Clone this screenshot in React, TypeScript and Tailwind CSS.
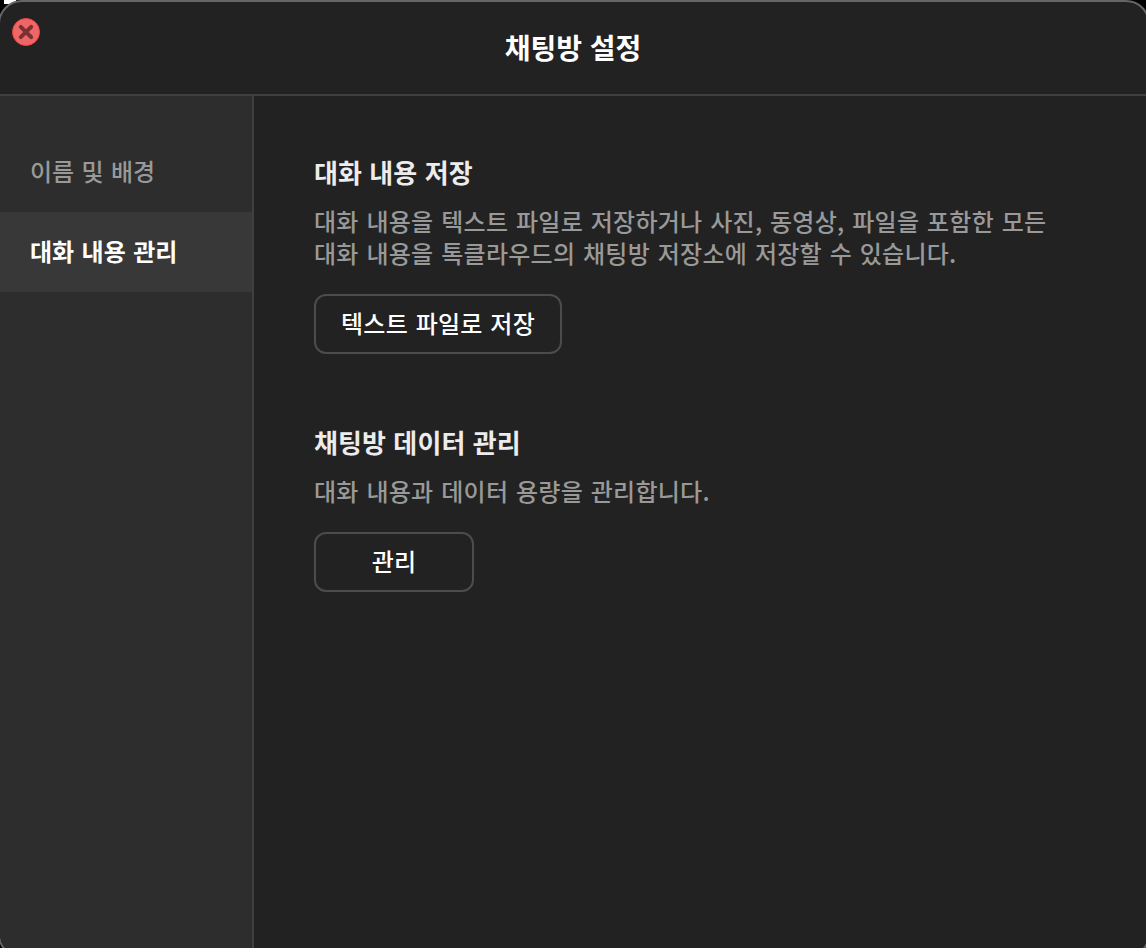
import React, { ReactNode, useState } from "react";

const menus = ["이름 및 배경", "대화 내용 관리"];

const CloseIcon = () => {
  return (
    <svg width="28" height="28" viewBox="0 0 28 28" fill="none">
      <circle cx="14" cy="14" r="13.5" fill="#ef6666" stroke="#ee4543" />
      <path
        d="M8.8 8.8L19.2 19.2M19.2 8.8L8.8 19.2"
        stroke="#7a3132"
        strokeWidth="4"
        strokeLinecap="round"
      />
    </svg>
  );
};

type SectionProps = {
  title: string;
  button: string;
  buttonClass: string;
  children: ReactNode;
};

const Section = ({ title, button, buttonClass, children }: SectionProps) => {
  return (
    <section className="flex flex-col items-start">
      <h2 className="text-[26px] leading-8 font-bold tracking-[0.1px] text-[#ececec] [word-spacing:1.3px]">
        {title}
      </h2>
      <p className="mt-[17px] text-2xl leading-8 font-medium tracking-[0.28px] whitespace-nowrap text-[#999999] [word-spacing:2px]">
        {children}
      </p>
      <button
        className={`mt-[25px] h-[60px] rounded-xl border-2 border-[#4c4c4c] pb-0.5 text-2xl font-medium tracking-[0.25px] text-white [word-spacing:2px] ${buttonClass}`}
      >
        {button}
      </button>
    </section>
  );
};

const App = () => {
  const [selected, setSelected] = useState(1);

  return (
    <div className="h-[948px] w-[1146px] overflow-hidden bg-black font-['Noto_Sans_CJK_KR',sans-serif]">
      <div className="h-1 w-4 bg-gradient-to-r from-black from-25% to-white to-25%"></div>
      <div className="-mx-[2px] -mt-1 flex h-[958px] w-[1152px] flex-col overflow-hidden rounded-[24px] border-2 border-[#666666] bg-[#222222]">
        <header className="flex h-[94px] shrink-0 border-b-2 border-[#404040] pl-3">
          <button className="mt-4 h-7 w-7" aria-label="닫기">
            <CloseIcon />
          </button>
          <h1 className="flex-1 pt-[25px] pr-[42px] text-center text-[28px] leading-10 font-bold text-white [word-spacing:1.5px]">
            채팅방 설정
          </h1>
        </header>
        <div className="flex flex-1">
          <nav className="flex w-[254px] shrink-0 flex-col border-r-2 border-[#404040] bg-[#2d2d2d] pt-9">
            {menus.map((menu, index) => {
              return (
                <button
                  key={menu}
                  onClick={() => setSelected(index)}
                  className={`h-20 pb-0.5 pl-[30px] text-left text-2xl [word-spacing:2px] ${
                    selected === index
                      ? "bg-[#383838] font-bold text-white"
                      : "font-medium text-[#999999]"
                  }`}
                >
                  {menu}
                </button>
              );
            })}
          </nav>
          <main className="flex flex-1 flex-col gap-[72px] pt-[60px] pl-[60px]">
            <Section
              title="대화 내용 저장"
              button="텍스트 파일로 저장"
              buttonClass="w-[248px]"
            >
              대화 내용을 텍스트 파일로 저장하거나 사진, 동영상, 파일을 포함한 모든
              <br />
              대화 내용을 톡클라우드의 채팅방 저장소에 저장할 수 있습니다.
            </Section>
            <Section
              title="채팅방 데이터 관리"
              button="관리"
              buttonClass="w-[160px]"
            >
              대화 내용과 데이터 용량을 관리합니다.
            </Section>
          </main>
        </div>
      </div>
    </div>
  );
};

export default App;
